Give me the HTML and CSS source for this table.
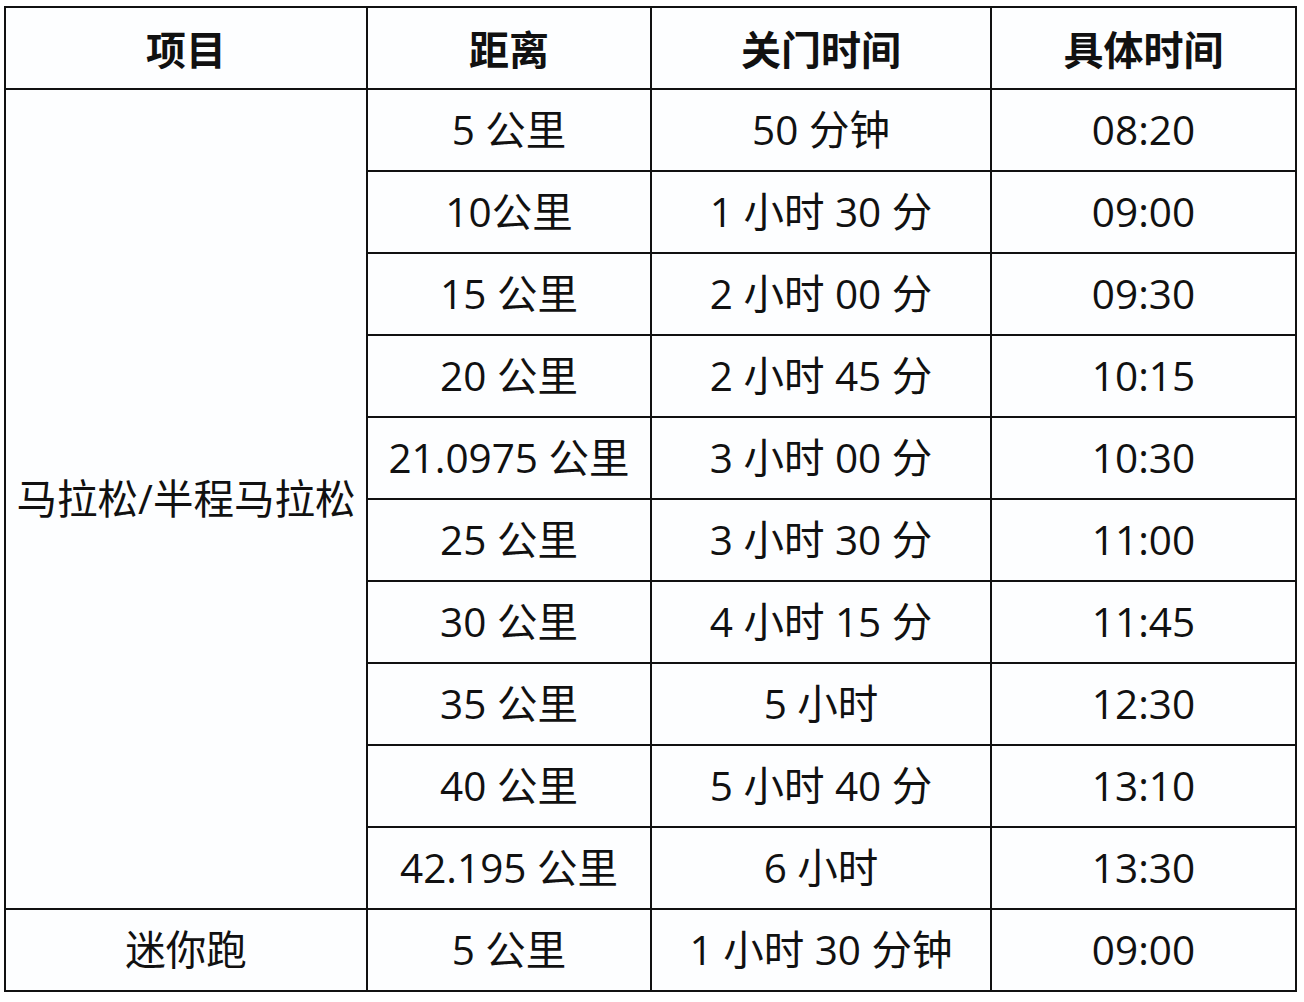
FILE: index.html
```html
<!DOCTYPE html>
<html lang="zh">
<head>
<meta charset="utf-8">
<link rel="stylesheet" href="styles.css">
</head>
<body>
<table class="grid">
  <colgroup>
    <col class="c1"><col class="c2"><col class="c3"><col class="c4">
  </colgroup>
  <thead>
    <tr><th>项目</th><th>距离</th><th>关门时间</th><th>具体时间</th></tr>
  </thead>
  <tbody>
    <tr><td rowspan="10" class="cat">马拉松/半程马拉松</td><td>5 公里</td><td>50 分钟</td><td>08:20</td></tr>
    <tr><td>10公里</td><td>1 小时 30 分</td><td>09:00</td></tr>
    <tr><td>15 公里</td><td>2 小时 00 分</td><td>09:30</td></tr>
    <tr><td>20 公里</td><td>2 小时 45 分</td><td>10:15</td></tr>
    <tr><td>21.0975 公里</td><td>3 小时 00 分</td><td>10:30</td></tr>
    <tr><td>25 公里</td><td>3 小时 30 分</td><td>11:00</td></tr>
    <tr><td>30 公里</td><td>4 小时 15 分</td><td>11:45</td></tr>
    <tr><td>35 公里</td><td>5 小时</td><td>12:30</td></tr>
    <tr><td>40 公里</td><td>5 小时 40 分</td><td>13:10</td></tr>
    <tr><td>42.195 公里</td><td>6 小时</td><td>13:30</td></tr>
    <tr><td class="cat">迷你跑</td><td>5 公里</td><td>1 小时 30 分钟</td><td>09:00</td></tr>
  </tbody>
</table>
</body>
</html>
```
FILE: styles.css
```css
html, body {
  margin: 0;
  padding: 0;
  background: #ffffff;
}
body {
  padding: 6px 0 0 4px;
  font-family: "Open Sans", "Noto Sans CJK SC", sans-serif;
  color: #111;
}
.grid {
  border-collapse: collapse;
  table-layout: fixed;
  width: 1291px;
  background: #fdfeff;
}
.c1 { width: 362px; }
.c2 { width: 284px; }
.c3 { width: 340px; }
.c4 { width: 305px; }
.grid th, .grid td {
  border: 2px solid #111;
  height: 82px;
  padding: 0;
  text-align: center;
  vertical-align: middle;
  font-size: 40.5px;
  line-height: 1;
  white-space: nowrap;
  box-sizing: border-box;
}
.grid th {
  font-weight: 700;
  font-family: "Noto Sans CJK SC", sans-serif;
  font-size: 40px;
}
.grid td { font-weight: 400; }
```
